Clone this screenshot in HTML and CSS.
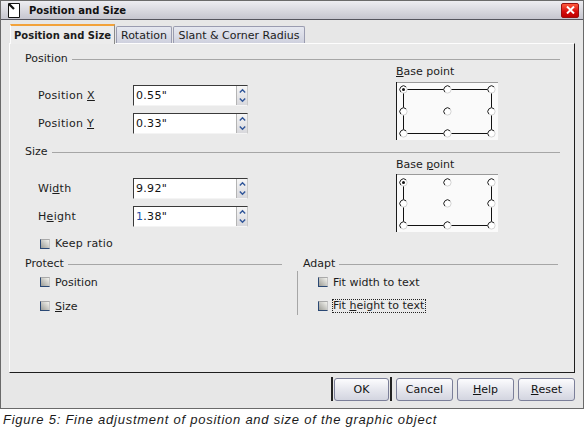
FILE: index.html
```html
<!DOCTYPE html>
<html>
<head>
<meta charset="utf-8">
<link rel="stylesheet" href="styles.css">
</head>
<body>
<div class="window">
  <div class="titlebar">
    <svg class="app-icon" width="12" height="15" viewBox="0 0 12 15">
      <path d="M0.5 0.5H11.5V14.5H0.5Z" fill="#fff" stroke="#111"/>
      <path d="M1 1L6 6" stroke="#111" stroke-width="2.2"/>
    </svg>
    <span class="title">Position and Size</span>
    <span class="close">
      <svg width="9" height="8" viewBox="0 0 9 8"><path d="M1 0.5L8 7.5M8 0.5L1 7.5" stroke="#fff" stroke-width="2"/></svg>
    </span>
  </div>

  <div class="tabs">
    <div class="tab active">Position and Size</div>
    <div class="tab tab-rot">Rotation</div>
    <div class="tab tab-slant">Slant &amp; Corner Radius</div>
  </div>

  <div class="panel">
    <section class="group">
      <div class="group-head"><span>Position</span><i class="rule"></i></div>
      <div class="group-body">
        <div class="fields">
          <div class="field"><label>Position <u>X</u></label>
            <div class="spin"><span class="value">0.55"</span><span class="arrows"><svg width="9" height="19" viewBox="0 0 9 19"><path d="M1.8 6.5L4.5 3.8L7.2 6.5M1.8 12.5L4.5 15.2L7.2 12.5" fill="none" stroke="#2f5598" stroke-width="1.4"/></svg></span></div>
          </div>
          <div class="field"><label>Position <u>Y</u></label>
            <div class="spin"><span class="value">0.33"</span><span class="arrows"><svg width="9" height="19" viewBox="0 0 9 19"><path d="M1.8 6.5L4.5 3.8L7.2 6.5M1.8 12.5L4.5 15.2L7.2 12.5" fill="none" stroke="#2f5598" stroke-width="1.4"/></svg></span></div>
          </div>
        </div>
        <div class="basepoint">
          <div class="bp-label"><u>B</u>ase point</div>
          <svg class="bp-box" width="102" height="58" viewBox="0 0 102 58">
            <defs>
              <g id="rb">
                <circle cx="0" cy="0" r="3.6" fill="#fff" stroke="#d4d4d4"/>
                <path d="M-2.6 2.6A3.6 3.6 0 0 1 2.6 -2.6" fill="none" stroke="#2a2a2a"/>
              </g>
            </defs>
            <rect x="0" y="0" width="102" height="58" fill="#fafafa"/>
            <path d="M1 0.5H102" stroke="#9a9a9a"/>
            <path d="M0.5 0V58" stroke="#1a1a1a"/>
            <path d="M7.5 7.5H95.5V51.5H7.5Z" fill="none" stroke="#111"/>
            <use href="#rb" x="7.5" y="7.5"/><use href="#rb" x="51.5" y="7.5"/><use href="#rb" x="95.5" y="7.5"/>
            <use href="#rb" x="7.5" y="29.5"/><use href="#rb" x="51.5" y="29.5"/><use href="#rb" x="95.5" y="29.5"/>
            <use href="#rb" x="7.5" y="51.5"/><use href="#rb" x="51.5" y="51.5"/><use href="#rb" x="95.5" y="51.5"/>
            <circle cx="7.5" cy="7.5" r="1.5" fill="#111"/>
          </svg>
        </div>
      </div>
    </section>

    <section class="group group-size">
      <div class="group-head"><span>Size</span><i class="rule"></i></div>
      <div class="group-body">
        <div class="fields">
          <div class="field"><label>Wi<u>d</u>th</label>
            <div class="spin"><span class="value">9.92"</span><span class="arrows"><svg width="9" height="19" viewBox="0 0 9 19"><path d="M1.8 6.5L4.5 3.8L7.2 6.5M1.8 12.5L4.5 15.2L7.2 12.5" fill="none" stroke="#2f5598" stroke-width="1.4"/></svg></span></div>
          </div>
          <div class="field"><label>H<u>e</u>ight</label>
            <div class="spin"><span class="value"><span class="cursor">1</span>.38"</span><span class="arrows"><svg width="9" height="19" viewBox="0 0 9 19"><path d="M1.8 6.5L4.5 3.8L7.2 6.5M1.8 12.5L4.5 15.2L7.2 12.5" fill="none" stroke="#2f5598" stroke-width="1.4"/></svg></span></div>
          </div>
          <div class="check keep"><span class="box"></span><span>Keep ratio</span></div>
        </div>
        <div class="basepoint">
          <div class="bp-label">Base <u>p</u>oint</div>
          <svg class="bp-box bp-second" width="102" height="58" viewBox="0 0 102 58">
            <rect x="0" y="0" width="102" height="58" fill="#fafafa"/>
            <path d="M1 0.5H102" stroke="#9a9a9a"/>
            <path d="M0.5 0V58" stroke="#1a1a1a"/>
            <path d="M7.5 8.5V51.5H95.5V8.5" fill="none" stroke="#111"/>
            <use href="#rb" x="7.5" y="8.5"/><use href="#rb" x="51.5" y="8.5"/><use href="#rb" x="95.5" y="8.5"/>
            <use href="#rb" x="7.5" y="29.5"/><use href="#rb" x="51.5" y="29.5"/><use href="#rb" x="95.5" y="29.5"/>
            <use href="#rb" x="7.5" y="51.5"/><use href="#rb" x="51.5" y="51.5"/><use href="#rb" x="95.5" y="51.5"/>
            <circle cx="7.5" cy="8.5" r="1.5" fill="#111"/>
          </svg>
        </div>
      </div>
    </section>

    <div class="options">
      <section class="protect">
        <div class="group-head"><span>Protect</span><i class="rule"></i></div>
        <div class="opt-body">
          <div class="check"><span class="box"></span><span>Position</span></div>
          <div class="check"><span class="box"></span><span><u>S</u>ize</span></div>
        </div>
      </section>
      <section class="adapt">
        <div class="group-head"><span>Adapt</span><i class="rule"></i></div>
        <div class="opt-body">
          <div class="check"><span class="box"></span><span>Fit width to text</span></div>
          <div class="check check-focus"><span class="box"></span><span class="focus">Fit <u>h</u>eight to text</span></div>
        </div>
      </section>
    </div>
  </div>

  <div class="buttons">
    <span class="default"><span class="btn btn-ok">OK</span></span>
    <span class="btn">Cancel</span>
    <span class="btn"><u>H</u>elp</span>
    <span class="btn"><u>R</u>eset</span>
  </div>
</div>
<p class="caption">Figure 5: Fine adjustment of position and size of the graphic object</p>
</body>
</html>
```

FILE: styles.css
```css
* { box-sizing: border-box; }
html, body { margin: 0; padding: 0; background: #fff; }
body {
  width: 585px;
  height: 437px;
  overflow: hidden;
  font: 11px/13px "DejaVu Sans", sans-serif;
  color: #1c1c1c;
}
u { text-decoration: underline; text-underline-offset: 1px; }

.window {
  width: 584px;
  height: 409px;
  border: 1px solid #6a6a6a;
  background: #e7e7e7;
  display: flex;
  flex-direction: column;
}

.titlebar {
  height: 19px;
  flex: none;
  display: flex;
  align-items: center;
  padding: 0 4px 0 7px;
  border-bottom: 1px solid #55555e;
  background: linear-gradient(#ededf1, #c6c6cf);
}
.app-icon { flex: none; margin-right: 9px; }
.title { flex: 1; font-weight: bold; font-size: 10px; color: #111; }
.close {
  width: 18px;
  height: 15px;
  display: flex;
  align-items: center;
  justify-content: center;
  border: 1px solid #9a1010;
  border-radius: 2px;
  background: linear-gradient(#ff5a3c, #d40c0c 60%, #c00000);
}

.tabs {
  height: 23px;
  flex: none;
  display: flex;
  align-items: flex-end;
  padding-left: 9px;
}
.tab {
  height: 17px;
  display: flex;
  align-items: center;
  justify-content: center;
  border: 1px solid #9a9cb0;
  border-bottom: none;
  border-radius: 2px 2px 0 0;
  background: linear-gradient(#e6e8f0, #cfd1de);
  margin-left: 1px;
  white-space: nowrap;
}
.tab.active {
  position: relative;
  z-index: 1;
  width: 105px;
  height: 20px;
  margin: 0 0 -1px 0;
  font-weight: bold;
  background: #ececec;
  border-top: 2px solid #f2a23a;
  border-left: 1px solid #fdfdfd;
  border-right: 1px solid #8a8a8a;
  border-radius: 0;
  font-size: 10px;
}
.tab-rot { width: 56px; }
.tab-slant { width: 132px; }

.panel {
  height: 330px;
  flex: none;
  margin: 0 8px;
  padding: 8px 14px 0 15px;
  border-top: 1px solid #fdfdfd;
  border-left: 1px solid #fdfdfd;
  border-right: 1px solid #1e1e1e;
  border-bottom: 1px solid #1e1e1e;
  background: #eaeaea;
}

.group-head {
  height: 13px;
  display: flex;
  align-items: center;
  gap: 4px;
}
.rule {
  flex: 1;
  height: 1px;
  margin-top: 1px;
  background: #a6a6a6;
}
.group-size { margin-top: 5px; }

.group-body { display: flex; }
.fields {
  width: 371px;
  padding: 20px 0 0 13px;
  display: flex;
  flex-direction: column;
  gap: 7px;
}
.field {
  height: 21px;
  display: flex;
  align-items: center;
}
.field label { width: 95px; letter-spacing: 0.3px; }
.spin {
  width: 115px;
  height: 21px;
  display: flex;
  background: #fff;
  border-top: 1px solid #3a3a3a;
  border-left: 1px solid #3a3a3a;
  border-right: 1px solid #c9c9c9;
  border-bottom: 1px solid #f4f4f4;
}
.value { flex: 1; padding-left: 2px; line-height: 19px; color: #111; letter-spacing: 0.3px; }
.cursor { color: #1d4fa8; }
.arrows {
  width: 11px;
  display: flex;
  justify-content: center;
  border-left: 1px solid #b4b4b4;
  background: linear-gradient(#f6f6f6, #d8d8dc);
}

.basepoint { display: flex; flex-direction: column; }
.bp-label { line-height: 14px; }
.bp-box { display: block; margin-top: 3px; }
.bp-second { margin-top: 2px; }

.check {
  height: 14px;
  display: flex;
  align-items: center;
  gap: 5px;
}
.box {
  width: 10px;
  height: 10px;
  flex: none;
  border-left: 1px solid #2a4874;
  border-bottom: 1px solid #2a4874;
  border-top: 1px solid #a9a9a9;
  border-right: 1px solid #c6c6c6;
  background: linear-gradient(45deg, #9d9d96, #f3f3ef);
}
.keep { height: 13px; margin: 3px 0 0 2px; letter-spacing: 0.2px; }

.options {
  display: flex;
  margin-top: 7px;
}
.protect { width: 257px; }
.protect .opt-body {
  padding: 5px 0 0 15px;
  display: flex;
  flex-direction: column;
  gap: 10px;
}
.adapt { width: 261px; margin-left: 15px; }
.adapt .group-head { padding-left: 6px; }
.adapt .opt-body {
  margin-top: 1px;
  padding: 4px 0 2px 20px;
  border-left: 1px solid #a6a6a6;
  display: flex;
  flex-direction: column;
  gap: 10px;
}
.check-focus { gap: 4px; }
.focus { border: 1px dotted #222; padding: 0 1px 0 0; line-height: 12px; }

.buttons {
  display: flex;
  justify-content: flex-end;
  align-items: center;
  gap: 4px;
  padding: 4px 8px 0 0;
}
.btn {
  width: 57px;
  height: 23px;
  display: flex;
  align-items: center;
  justify-content: center;
  border: 1px solid #7b7f99;
  border-radius: 3px;
  background: linear-gradient(#fcfcfe, #e6e7ee 50%, #d3d5e0);
  color: #111;
}
.default {
  display: flex;
  height: 24px;
  align-items: center;
  padding: 0 1px;
  border-left: 2px solid #222;
  border-right: 2px solid #222;
}
.btn-ok { width: 55px; }

.caption {
  margin: 4px 0 0 3px;
  font: italic 13px/14px "Liberation Sans", sans-serif;
  letter-spacing: 0.75px;
  color: #1a1a1a;
}
```
